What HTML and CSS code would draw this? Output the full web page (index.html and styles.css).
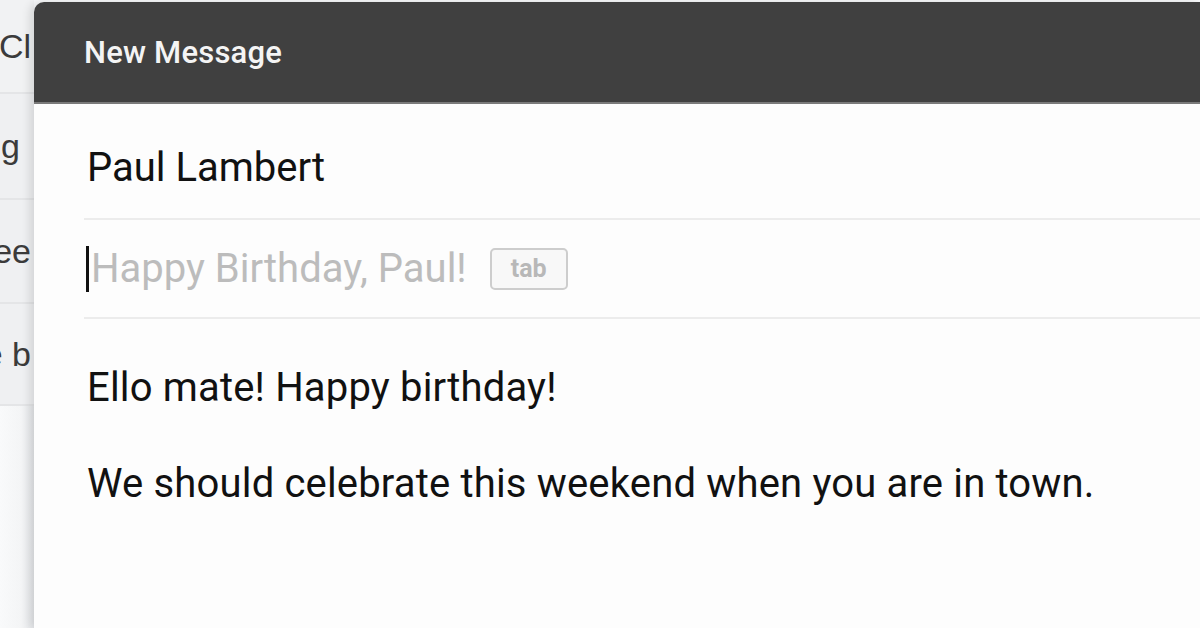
FILE: index.html
```html
<!DOCTYPE html>
<html>
<head>
<meta charset="utf-8">
<link rel="stylesheet" href="styles.css">
</head>
<body>
<div class="desk">
  <div class="inbox">
    <div class="row r1"><span>Cl</span></div>
    <div class="row r2"><span>g</span></div>
    <div class="row r3"><span>ee</span></div>
    <div class="row r4"><span>e b</span></div>
  </div>
  <div class="compose">
    <div class="titlebar">New Message</div>
    <div class="fields">
      <div class="field to">Paul Lambert</div>
      <div class="field subject">
        <span class="caret"></span><span class="hint">Happy Birthday, Paul!</span><span class="key">tab</span>
      </div>
      <div class="body">
        <p>Ello mate! Happy birthday!</p>
        <p>We should celebrate this weekend when you are in town.</p>
      </div>
    </div>
  </div>
</div>
</body>
</html>
```
FILE: styles.css
```css
html, body {
  margin: 0;
  padding: 0;
  width: 1200px;
  height: 628px;
  overflow: hidden;
  background: #f8f9fa;
}
.desk {
  display: flex;
  height: 628px;
  font-family: Roboto, "Noto Sans", sans-serif;
}
.inbox {
  width: 34px;
  flex: none;
  overflow: hidden;
  background: linear-gradient(to right, #f9fafb 0, #f4f5f6 60%, #e6e8eb 100%);
}
.row {
  box-sizing: border-box;
  border-bottom: 2px solid #e4e5e7;
  background: #eff0f2;
  display: flex;
  align-items: center;
  justify-content: flex-end;
  white-space: nowrap;
  font-family: "Liberation Sans", Arial, sans-serif;
  font-size: 34px;
  color: #3b3b3b;
}
.r1 {
  height: 94px;
  background: #f1f2f3;
}
.r1 span { margin-right: 3px; }
.r2 { height: 106px; }
.r2 span { margin-right: 14px; }
.r3 { height: 104px; }
.r3 span { margin-right: 3px; }
.r4 { height: 102px; }
.r4 span { margin-right: 3px; }
.compose {
  flex: 1;
  margin-top: 2px;
  background: #fdfdfd;
  border-top-left-radius: 10px;
  overflow: hidden;
  box-shadow: -4px 0 10px rgba(0, 0, 0, 0.12);
}
.titlebar {
  background: #404040;
  border-bottom: 2px solid #7a7a7a;
  box-sizing: border-box;
  height: 102px;
  padding-left: 50px;
  display: flex;
  align-items: center;
  color: #f4f4f4;
  font-size: 31px;
  font-weight: 500;
  letter-spacing: 0.2px;
}
.fields {
  padding-left: 50px;
}
.field {
  font-size: 40px;
  line-height: 48px;
  border-bottom: 2px solid #ececec;
}
.to {
  padding: 40px 0 26px 3px;
  color: #111;
}
.subject {
  padding-top: 25px;
  padding-bottom: 24px;
  display: flex;
  align-items: center;
}
.caret {
  width: 3px;
  height: 46px;
  background: #111;
  margin-left: 2px;
  margin-right: 2px;
}
.hint {
  color: #bcbcbc;
}
.key {
  margin-left: 23px;
  width: 78px;
  height: 42px;
  box-sizing: border-box;
  border: 2px solid #cdcdcd;
  border-radius: 5px;
  background: #f8f8f8;
  color: #b8b8b8;
  font-size: 25px;
  font-weight: 700;
  line-height: 38px;
  text-align: center;
}
.body {
  padding: 45px 0 0 3px;
  font-size: 40px;
  line-height: 48px;
  letter-spacing: 0.17px;
  color: #111;
}
.body p {
  margin: 0 0 48px 0;
}
```
